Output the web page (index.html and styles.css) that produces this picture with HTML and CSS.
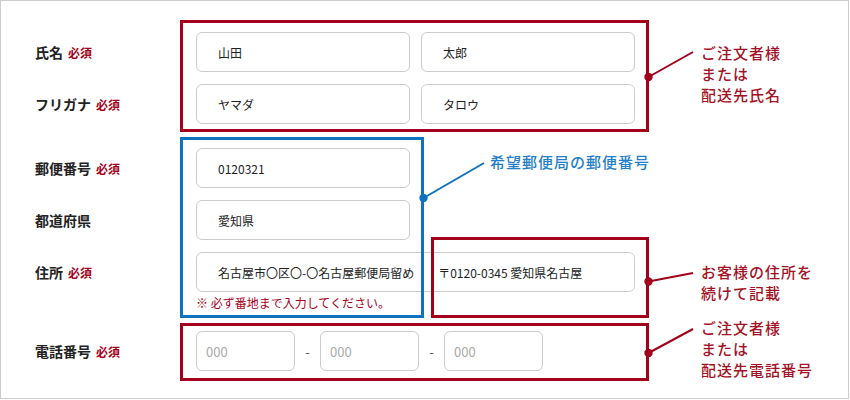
FILE: index.html
```html
<!DOCTYPE html>
<html lang="ja">
<head>
  <title>配送先の入力例</title>
  <meta charset="UTF-8">
  <meta name="viewport" content="width=device-width, initial-scale=1.0">
  <link rel="stylesheet" href="styles.css">
</head>
<body>
  <div id="page">
    <div id="frame">
      <div class="row">
        <div class="label">氏名<span class="req">必須</span></div>
        <div class="fields">
          <input class="field half" type="text" value="山田">
          <input class="field half" type="text" value="太郎">
        </div>
      </div>
      <div class="row">
        <div class="label">フリガナ<span class="req">必須</span></div>
        <div class="fields">
          <input class="field half" type="text" value="ヤマダ">
          <input class="field half" type="text" value="タロウ">
        </div>
      </div>
      <div class="row group-start">
        <div class="label">郵便番号<span class="req">必須</span></div>
        <div class="fields">
          <input class="field half" type="text" value="0120321">
        </div>
      </div>
      <div class="row">
        <div class="label">都道府県</div>
        <div class="fields">
          <input class="field half" type="text" value="愛知県">
        </div>
      </div>
      <div class="row with-hint">
        <div class="label">住所<span class="req">必須</span></div>
        <div class="fields column">
          <input class="field wide" type="text" value="名古屋市〇区〇-〇名古屋郵便局留め　　〒0120-0345 愛知県名古屋">
          <p class="hint">※ 必ず番地まで入力してください。</p>
        </div>
      </div>
      <div class="row">
        <div class="label">電話番号<span class="req">必須</span></div>
        <div class="fields">
          <input class="field tel" type="text" placeholder="000">
          <span class="dash">-</span>
          <input class="field tel" type="text" placeholder="000">
          <span class="dash">-</span>
          <input class="field tel" type="text" placeholder="000">
        </div>
      </div>
    </div>

    <!-- annotations drawn over the form -->
    <div class="mark red box-name"></div>
    <div class="mark blue box-post"></div>
    <div class="mark red box-addr"></div>
    <div class="mark red box-tel"></div>

    <svg class="leaders" width="849" height="399" viewBox="0 0 849 399">
      <g stroke="#a3001b" stroke-width="2" fill="#a3001b">
        <line x1="648.5" y1="77" x2="693" y2="52"/>
        <circle cx="648.5" cy="77" r="3.2"/>
        <line x1="648.5" y1="281.5" x2="693" y2="273"/>
        <circle cx="648.5" cy="281.5" r="3.2"/>
        <line x1="648.5" y1="353" x2="693" y2="329"/>
        <circle cx="648.5" cy="353" r="3.2"/>
      </g>
      <g stroke="#0d72bf" stroke-width="2" fill="#0d72bf">
        <line x1="423.5" y1="198" x2="484" y2="163"/>
        <circle cx="423.5" cy="198" r="3.2"/>
      </g>
    </svg>

    <div class="callout red-text call-name">ご注文者様<br>または<br>配送先氏名</div>
    <div class="callout blue-text call-post">希望郵便局の郵便番号</div>
    <div class="callout red-text call-addr">お客様の住所を<br>続けて記載</div>
    <div class="callout red-text call-tel">ご注文者様<br>または<br>配送先電話番号</div>
  </div>
</body>
</html>
```

FILE: styles.css
```css
body {
  margin: 0;
  padding: 0;
  background-color: #fff;
  font-family: "Noto Sans CJK JP", "Noto Sans", sans-serif;
  color: #222;
}

#page {
  position: relative;
  width: 849px;
  height: 399px;
}

#frame {
  box-sizing: border-box;
  width: 849px;
  height: 399px;
  border: 1px solid #ccc;
  padding: 31px 0 0 34px;
  display: flex;
  flex-direction: column;
}

.row {
  display: grid;
  grid-template-columns: 161px 1fr;
  align-items: start;
  margin-bottom: 12px;
}

.row.group-start {
  margin-top: 12px;
}

.row.with-hint {
  margin-bottom: 20px;
}

.label {
  height: 40px;
  display: flex;
  align-items: center;
  gap: 5px;
  font-size: 14px;
  font-weight: bold;
  color: #222;
}

.req {
  font-size: 12px;
  font-weight: bold;
  color: #a3001b;
}

.fields {
  display: flex;
  align-items: center;
  gap: 11px;
}

.fields.column {
  flex-direction: column;
  align-items: flex-start;
  gap: 0;
}

.field {
  box-sizing: border-box;
  height: 40px;
  margin: 0;
  padding: 0 21px;
  border: 1px solid #ccc;
  border-radius: 6px;
  background-color: #fff;
  font-family: "Noto Sans CJK JP", "Noto Sans", sans-serif;
  font-size: 12px;
  color: #222;
  outline: none;
}

.field.half {
  width: 214px;
}

.field.wide {
  width: 439px;
}

.field.tel {
  width: 99px;
  padding: 0 9px;
  font-size: 13px;
}

.field.tel::placeholder {
  color: #aaa;
}

.fields .dash {
  width: 25px;
  margin: 0 -11px;
  text-align: center;
  font-size: 13px;
  color: #555;
}

.hint {
  margin: 3px 0 0 0;
  font-size: 12px;
  line-height: 16px;
  color: #a3001b;
}

/* annotation layer */
.mark {
  position: absolute;
  box-sizing: border-box;
  border: 3px solid;
}

.mark.red {
  border-color: #a3001b;
}

.mark.blue {
  border-color: #0d72bf;
}

.box-name {
  left: 180px;
  top: 20px;
  width: 469px;
  height: 112px;
}

.box-post {
  left: 180px;
  top: 137px;
  width: 244px;
  height: 181px;
}

.box-addr {
  left: 431px;
  top: 237px;
  width: 218px;
  height: 81px;
}

.box-tel {
  left: 180px;
  top: 323px;
  width: 469px;
  height: 58px;
}

.leaders {
  position: absolute;
  top: 0;
  left: 0;
  pointer-events: none;
}

.callout {
  position: absolute;
  font-size: 15px;
  font-weight: 500;
  line-height: 21px;
  letter-spacing: 1px;
  white-space: nowrap;
}

.red-text {
  color: #a31124;
}

.blue-text {
  color: #1f7fca;
}

.call-name {
  left: 701px;
  top: 42px;
}

.call-post {
  left: 490px;
  top: 151px;
}

.call-addr {
  left: 701px;
  top: 261px;
}

.call-tel {
  left: 701px;
  top: 317px;
}
```
